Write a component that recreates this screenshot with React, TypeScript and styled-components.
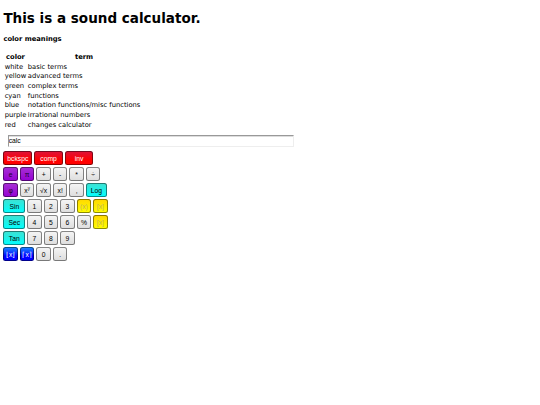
import React from 'react';
import styled, { createGlobalStyle } from 'styled-components';

type KeyColor = 'white' | 'red' | 'purple' | 'cyan' | 'yellow' | 'blue';

interface KeyDef {
  label: React.ReactNode;
  color?: KeyColor;
  width?: number;
}

const fills: Record<KeyColor, string> = {
  white: 'linear-gradient(#f6f6f6, #dcdcdc)',
  red: 'linear-gradient(#dc143c, #ff0000 65%)',
  purple: 'linear-gradient(#a832d4, #9400d3)',
  cyan: 'linear-gradient(#40e0d0, #00ffff)',
  yellow: 'linear-gradient(#ffd700, #ffff00)',
  blue: 'linear-gradient(#1e90ff, #0000ff 65%)',
};

const inks: Record<KeyColor, string> = {
  white: '#000',
  red: '#fff',
  purple: '#1c0030',
  cyan: '#000',
  yellow: '#bdb45c',
  blue: '#fff',
};

const GlobalStyle = createGlobalStyle`
  body {
    margin: 0;
    background: #fff;
    color: #000;
    font-family: 'DejaVu Sans', sans-serif;
    font-size: 6.75px;
  }
`;

const Page = styled.main`
  padding: 9.5px 3.4px 0;
`;

const Title = styled.h1`
  margin: 0;
  font-size: 13.52px;
  line-height: 16px;
`;

const Subtitle = styled.h4`
  margin: 9px 0 0;
  font-size: 6.75px;
  line-height: 9px;
`;

const Legend = styled.table`
  margin-top: 8px;
  border-spacing: 1px;
  line-height: 8px;

  th,
  td {
    box-sizing: border-box;
    height: 8.72px;
    padding: 0.25px;
  }
`;

const Display = styled.input`
  display: block;
  box-sizing: border-box;
  width: 286px;
  height: 12.5px;
  margin: 4.3px 0 0 4.3px;
  padding: 0;
  border: 1px solid #eee;
  border-top-color: #999;
  border-left-color: #999;
  outline: none;
  box-shadow: inset 0 1px #ddd;
  font: 6.75px 'Liberation Sans', Arial, sans-serif;
`;

const Keypad = styled.div`
  display: flex;
  flex-direction: column;
  gap: 2px;
  margin-top: 4px;
`;

const KeyRow = styled.div`
  display: flex;
  gap: 2px;
`;

const Key = styled.button<{ $color: KeyColor; $width: number }>`
  box-sizing: border-box;
  width: ${props => props.$width}px;
  height: 14px;
  padding: 0;
  border: 1px solid rgba(0, 0, 0, 0.45);
  border-radius: 2.5px;
  background: ${props => fills[props.$color]};
  background-clip: border-box;
  background-origin: border-box;
  color: ${props => inks[props.$color]};
  font: 6.75px/11px 'Liberation Sans', Arial, sans-serif;
  text-align: center;
  white-space: nowrap;

  sup {
    font-size: 4.5px;
    line-height: 0;
  }
`;

const legend = [
  ['white', 'basic terms'],
  ['yellow', 'advanced terms'],
  ['green', 'complex terms'],
  ['cyan', 'functions'],
  ['blue', 'notation functions/misc functions'],
  ['purple', 'irrational numbers'],
  ['red', 'changes calculator'],
];

const keys: KeyDef[][] = [
  [
    { label: 'bckspc', color: 'red', width: 28.8 },
    { label: 'comp', color: 'red', width: 28.8 },
    { label: 'inv', color: 'red', width: 28.4 },
  ],
  [
    { label: 'e', color: 'purple' },
    { label: 'π', color: 'purple' },
    { label: '+' },
    { label: '-' },
    { label: '*' },
    { label: '÷' },
  ],
  [
    { label: 'φ', color: 'purple' },
    { label: <>x<sup>y</sup></> },
    { label: '√x' },
    { label: 'x!' },
    { label: ',' },
    { label: 'Log', color: 'cyan', width: 21.2 },
  ],
  [
    { label: 'Sin', color: 'cyan', width: 21.8 },
    { label: '1' },
    { label: '2' },
    { label: '3' },
    { label: '(x)', color: 'yellow' },
    { label: '[x]', color: 'yellow' },
  ],
  [
    { label: 'Sec', color: 'cyan', width: 21.8 },
    { label: '4' },
    { label: '5' },
    { label: '6' },
    { label: '%' },
    { label: '[x]', color: 'yellow' },
  ],
  [
    { label: 'Tan', color: 'cyan', width: 21.8 },
    { label: '7' },
    { label: '8' },
    { label: '9' },
  ],
  [
    { label: '⌊x⌋', color: 'blue' },
    { label: '⌈x⌉', color: 'blue' },
    { label: '0' },
    { label: '.' },
  ],
];

const App: React.FC = () => {
  const [value, setValue] = React.useState('calc');

  return (
    <Page>
      <GlobalStyle />
      <Title>This is a sound calculator.</Title>
      <Subtitle>color meanings</Subtitle>
      <Legend>
        <thead>
          <tr>
            <th>color</th>
            <th>term</th>
          </tr>
        </thead>
        <tbody>
          {legend.map(([color, term]) => (
            <tr key={color}>
              <td>{color}</td>
              <td>{term}</td>
            </tr>
          ))}
        </tbody>
      </Legend>
      <Display value={value} onChange={event => setValue(event.target.value)} />
      <Keypad>
        {keys.map((row, rowIndex) => (
          <KeyRow key={rowIndex}>
            {row.map(({ label, color = 'white', width = 14.5 }, index) => (
              <Key key={index} $color={color} $width={width}>
                {label}
              </Key>
            ))}
          </KeyRow>
        ))}
      </Keypad>
    </Page>
  );
};

export default App;
